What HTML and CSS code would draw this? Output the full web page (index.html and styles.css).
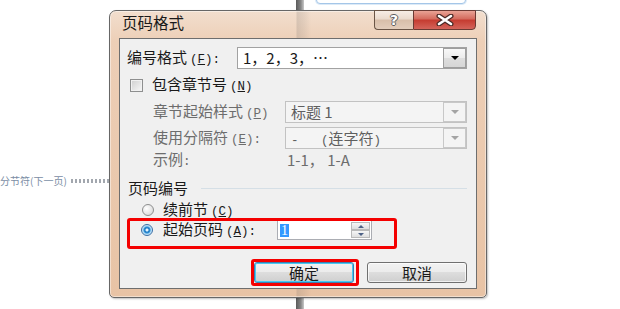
FILE: index.html
```html
<!DOCTYPE html>
<html lang="zh-CN">
<head>
<meta charset="utf-8">
<title>页码格式</title>
<link rel="stylesheet" href="styles.css">
</head>
<body>
<div class="screen">
  <div class="page-edge"></div>
  <div class="other-win"></div>
  <div class="section-break"><span class="sb-text">分节符(下一页)</span><span class="sb-dots"></span></div>

  <div class="dialog">
    <div class="titlebar">
      <span class="title">页码格式</span>
      <div class="caption-btns">
        <div class="cap help">?</div>
        <div class="cap close">
          <svg width="18" height="12" viewBox="0 0 18 12">
            <path d="M3 2 L15 10 M15 2 L3 10" stroke="#4a2a26" stroke-width="5" stroke-linecap="round"/>
            <path d="M3 2 L15 10 M15 2 L3 10" stroke="#ffffff" stroke-width="2.6" stroke-linecap="round"/>
          </svg>
        </div>
      </div>
    </div>

    <div class="client">
      <div class="row r-format">
        <span class="lbl lbl-main">编号格式<span class="ak">(<u>F</u>):</span></span>
        <div class="combo c-format">
          <span class="val">1，2，3，⋯</span>
          <span class="drop"><i class="tri"></i></span>
        </div>
      </div>

      <div class="row r-check">
        <span class="checkbox"></span>
        <span class="lbl">包含章节号<span class="ak">(<u>N</u>)</span></span>
      </div>

      <div class="row r-sub r-style">
        <span class="lbl dis lbl-sub">章节起始样式<span class="ak">(<u>P</u>)</span></span>
        <div class="combo c-sub disabled">
          <span class="val">标题 1</span>
          <span class="drop"><i class="tri"></i></span>
        </div>
      </div>

      <div class="row r-sub r-sep">
        <span class="lbl dis lbl-sub">使用分隔符<span class="ak">(<u>E</u>):</span></span>
        <div class="combo c-sub disabled">
          <span class="val pre"><span class="ak0">-   (</span>连字符<span class="ak0">)</span></span>
          <span class="drop"><i class="tri"></i></span>
        </div>
      </div>

      <div class="row r-sub r-example">
        <span class="lbl dis lbl-ex">示例<span class="ak0">:</span></span>
        <span class="lbl dis">1-1， 1-A</span>
      </div>

      <div class="row r-group">
        <span class="lbl">页码编号</span>
        <span class="group-line"></span>
      </div>

      <div class="row r-radio">
        <span class="radio"></span>
        <span class="lbl">续前节<span class="ak">(<u>C</u>)</span></span>
      </div>

      <div class="row r-radio r-start highlight">
        <span class="radio checked"></span>
        <span class="lbl lbl-start">起始页码<span class="ak">(<u>A</u>):</span></span>
        <div class="spin">
          <span class="spin-val"><span class="sel">1</span></span>
          <span class="spin-btns">
            <span class="sb up"><i class="arr-up"></i></span>
            <span class="sb down"><i class="arr-down"></i></span>
          </span>
        </div>
      </div>

      <div class="row r-buttons">
        <div class="btn default marked">确定</div>
        <div class="btn">取消</div>
      </div>
    </div>
  </div>
</div>
</body>
</html>
```

FILE: styles.css
```css
* { box-sizing: border-box; }
html, body { margin: 0; padding: 0; }
body {
  width: 620px;
  height: 309px;
  overflow: hidden;
  background: #ffffff;
  font-family: "Noto Sans CJK SC", "Noto Sans", sans-serif;
  font-size: 15px;
  color: #1a1a1a;
}
u { text-decoration: underline; text-underline-offset: 1px; }
.ak {
  font-family: "Liberation Mono", "DejaVu Sans Mono", monospace;
  font-size: 12.5px;
  margin-left: 3px;
}
.ak0 {
  font-family: "Liberation Mono", "DejaVu Sans Mono", monospace;
  font-size: 12.5px;
}

.screen { position: relative; width: 620px; height: 309px; }

/* background bits (behind the dialog) */
.page-edge {
  position: absolute;
  left: 296px; top: 0;
  width: 8px; height: 309px;
  background: linear-gradient(to right, #5a5a5a, #868686 60%, #c9c9c9);
}
.other-win {
  position: absolute;
  left: 316px; top: -12px;
  width: 150px; height: 16px;
  border: 1px solid #a4c6e8;
  border-radius: 4px;
  background: #ffffff;
  box-shadow: 0 0 0 1px #dceaf7;
}
.section-break {
  position: absolute;
  left: 0; top: 174px;
  display: flex;
  align-items: center;
  font-size: 10px;
  line-height: 14px;
  color: #7b8da4;
}
.sb-dots {
  width: 46px; height: 4px;
  margin-left: 4px;
  border-top: 2px dotted #a2a7ae;
  border-bottom: 2px dotted #a2a7ae;
}

/* dialog frame */
.dialog {
  position: absolute;
  left: 109px; top: 10px;
  width: 378px; height: 288px;
  border: 1px solid #676767;
  border-radius: 7px 7px 5px 5px;
  background:
    linear-gradient(to right, transparent 186px, rgba(80,80,80,.16) 187px, rgba(80,80,80,.08) 195px, transparent 201px),
    linear-gradient(#f2dece, #edcfb7 30px, #e8c3a5);
  box-shadow: inset 0 0 0 1px rgba(255,255,255,.45), 1px 1px 2px rgba(0,0,0,.25);
  padding: 0 9px 8px;
  display: flex;
  flex-direction: column;
}
.titlebar {
  height: 27px;
  flex: none;
  display: flex;
  align-items: flex-start;
  margin: 0 -9px;
  padding: 0 10px 0 12px;
}
.title { height: 22px; line-height: 22px; color: #1a1a1a; font-size: 15.5px; }
.caption-btns { margin-left: auto; margin-top: -1px; display: flex; height: 20px; }
.cap { height: 20px; display: flex; align-items: center; justify-content: center; }
.help {
  width: 39px;
  border: 1px solid #6a5546;
  border-right: none;
  border-radius: 0 0 0 4px;
  background: linear-gradient(#f7ede5, #eadacd 45%, #d8bea9 50%, #e3cdbb);
  color: #ffffff;
  font-family: "DejaVu Sans", sans-serif;
  font-weight: bold;
  font-size: 14px;
  text-shadow: 1px 0 0 #5e5e5e, -1px 0 0 #5e5e5e, 0 1px 0 #5e5e5e, 0 -1px 0 #5e5e5e;
}
.close {
  width: 63px;
  border: 1px solid #6b3a33;
  border-radius: 0 0 4px 0;
  background: linear-gradient(#e9a395, #d46a5c 45%, #c53b30 50%, #d4645a);
}

/* client area */
.client {
  flex: 1;
  border: 1px solid #6e6e6e;
  background: #f0f0f0;
  padding: 0 9px 0 7px;
  display: flex;
  flex-direction: column;
}
.row { display: flex; align-items: center; flex: none; }
.lbl { line-height: 16px; white-space: nowrap; }
.dis { color: #6d6d6d; }
.pre { white-space: pre; }

.r-format { height: 22px; margin-top: 8px; }
.lbl-main { width: 110px; }
.combo {
  flex: none;
  height: 22px;
  border: 1px solid #a2a2a2;
  background: #ffffff;
  display: flex;
  align-items: stretch;
}
.c-format { width: 230px; }
.combo .val { flex: 1; padding-left: 5px; line-height: 20px; white-space: pre; }
.drop {
  width: 23px;
  border: 1px solid #9e9e9e;
  background: linear-gradient(#f8f8f8, #ececec 50%, #dedede 50%, #d6d6d6);
  display: flex;
  align-items: center;
  justify-content: center;
}
.tri {
  width: 0; height: 0;
  border-left: 4px solid transparent;
  border-right: 4px solid transparent;
  border-top: 4px solid #000000;
}
.combo.disabled { background: #f4f4f4; border-color: #c2c2c2; }
.combo.disabled .val { color: #5f5f5f; }
.combo.disabled .drop { border-color: #c8c8c8; background: #f4f4f4; }
.combo.disabled .tri { border-top-color: #a4a4a4; }

.r-check { height: 16px; margin-top: 8px; }
.checkbox {
  width: 13px; height: 13px;
  margin-left: 3px; margin-right: 9px;
  border: 1px solid #8e8f8f;
  background: linear-gradient(135deg, #cfcfcf, #f8f8f8);
  box-shadow: inset 0 0 0 1px #f1f1f1;
}

.r-sub { padding-left: 26px; }
.lbl-sub { width: 132px; }
.c-sub { width: 182px; }
.r-style { height: 22px; margin-top: 8px; }
.r-sep { height: 22px; margin-top: 4px; }
.r-example { height: 16px; margin-top: 3px; }
.lbl-ex { width: 134px; }

.r-group { height: 16px; margin-top: 12px; padding-left: 1px; }
.group-line { flex: 1; height: 1px; margin-left: 13px; background: #d5dfe6; }

.r-radio { height: 16px; padding-left: 15px; }
.r-group + .r-radio { margin-top: 6px; }
.radio {
  width: 12px; height: 12px;
  margin-right: 9px;
  border: 1px solid #8e8f8f;
  border-radius: 50%;
  background: radial-gradient(circle at 35% 35%, #ffffff, #d2d2d2);
}
.radio.checked {
  border-color: #3b6ea5;
  background: radial-gradient(circle at 50% 50%, #e6f6ff 0 1px, #1f78c1 2px, #2f8fd6 3px, #a8d8f6 4px, #e9f5fc 6px);
}

.r-start { height: 24px; position: relative; padding-left: 14px; }
.r-start .radio { margin-right: 10px; }
.lbl-start { width: 114px; }
.highlight::after {
  content: "";
  position: absolute;
  left: 0; top: 0;
  width: 264px; height: 25px;
  border: 3px solid #f40000;
  border-radius: 3px;
  pointer-events: none;
}
.spin {
  width: 95px; height: 20px;
  border: 1px solid #abadb3;
  background: #ffffff;
  display: flex;
}
.spin-val { flex: 1; display: flex; align-items: center; padding-left: 2px; }
.sel {
  background: #3399ff;
  color: #ffffff;
  font-family: "Liberation Serif", serif;
  font-size: 14px;
  line-height: 13px;
  padding: 0 1px;
}
.spin-btns { width: 21px; display: flex; flex-direction: column; padding: 1px; }
.sb {
  flex: 1;
  border: 1px solid #b9b9b9;
  background: linear-gradient(#f6f6f6, #dedede);
  display: flex; align-items: center; justify-content: center;
}
.arr-up, .arr-down {
  width: 0; height: 0;
  border-left: 3px solid transparent;
  border-right: 3px solid transparent;
}
.arr-up { border-bottom: 3px solid #4d6185; }
.arr-down { border-top: 3px solid #4d6185; }

.r-buttons { margin-top: 20px; justify-content: flex-end; gap: 13px; }
.btn {
  position: relative;
  width: 100px; height: 21px;
  border: 1px solid #707070;
  border-radius: 3px;
  background: linear-gradient(#f2f2f2, #ebebeb 50%, #dddddd 50%, #cfcfcf);
  box-shadow: inset 0 0 0 1px rgba(255,255,255,.7);
  display: flex; align-items: center; justify-content: center;
  line-height: 16px;
}
.btn.default {
  border-color: #3c7fb1;
  box-shadow: inset 0 0 0 1px #48c9f2;
}
.marked::after {
  content: "";
  position: absolute;
  left: -4px; top: -4px;
  right: -6px; bottom: -4px;
  border: 3px solid #f40000;
  border-radius: 3px;
  pointer-events: none;
}
```
